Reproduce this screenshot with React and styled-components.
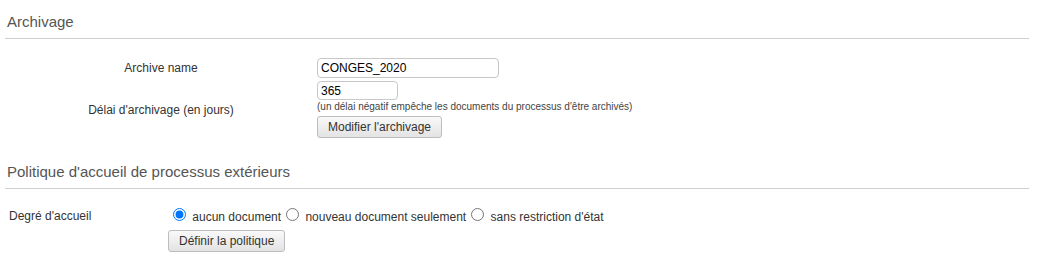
import React from 'react';
import styled, { createGlobalStyle } from 'styled-components';

const GlobalStyle = createGlobalStyle`
  body {
    margin: 0;
    background: #fff;
    font-family: "Liberation Sans", Arial, sans-serif;
    font-size: 12px;
    color: #333;
  }
`;

const Page = styled.div`
  width: 1024px;
  margin-left: 5px;
`;

const SectionTitle = styled.h2`
  margin: ${(p) => (p.$first ? '0' : '12px')} 0 0;
  padding: 13px 2px 7px;
  font-size: 15px;
  line-height: 18px;
  font-weight: normal;
  color: #555;
  border-bottom: 1px solid #cfcfcf;
`;

const FormGrid = styled.div`
  display: grid;
  grid-template-columns: ${(p) => p.$labelWidth}px 1fr;
  row-gap: 3px;
  align-items: center;
  margin-top: ${(p) => p.$top}px;
`;

const Label = styled.div`
  text-align: ${(p) => (p.$left ? 'left' : 'center')};
  padding-left: ${(p) => (p.$left ? '4px' : '0')};
  padding-top: ${(p) => (p.$left ? '4px' : '0')};
  align-self: ${(p) => (p.$left ? 'start' : 'center')};
  line-height: 14px;
  color: #333;
`;

const Field = styled.div`
  display: flex;
  flex-direction: column;
  align-items: flex-start;
`;

const TextInput = styled.input`
  box-sizing: border-box;
  width: ${(p) => p.$width}px;
  height: ${(p) => p.$height}px;
  margin: 0;
  padding: 0 3px;
  border: 1px solid #c8c8c8;
  border-radius: 4px;
  font-family: "Liberation Sans", Arial, sans-serif;
  font-size: 12px;
  color: #000;
  background: #fff;
  outline: none;
`;

const Hint = styled.div`
  font-size: 10px;
  line-height: 13px;
  color: #444;
  margin-bottom: 3px;
`;

const Button = styled.button`
  box-sizing: border-box;
  height: 22px;
  margin: ${(p) => p.$top || 0}px 0 0;
  padding: 0 10px;
  border: 1px solid #bdbdbd;
  border-radius: 3px;
  background: linear-gradient(to bottom, #f9f9f9, #e3e3e3);
  font-family: "Liberation Sans", Arial, sans-serif;
  font-size: 12px;
  color: #333;
  cursor: pointer;
`;

const RadioLine = styled.div`
  line-height: normal;
  white-space: nowrap;
  color: #333;
`;

const Radio = styled.input.attrs({ type: 'radio' })`
  width: 13px;
  height: 13px;
  margin: 3px 3px 0 5px;
  vertical-align: baseline;
`;

const options = [
  { value: 'none', label: 'aucun document' },
  { value: 'new', label: 'nouveau document seulement' },
  { value: 'any', label: "sans restriction d'état" },
];

export default function App() {
  return (
    <>
      <GlobalStyle />
      <Page>
        <SectionTitle $first>Archivage</SectionTitle>
        <FormGrid $labelWidth={312} $top={19}>
          <Label>Archive name</Label>
          <Field>
            <TextInput $width={182} $height={20} defaultValue="CONGES_2020" />
          </Field>
          <Label>Délai d'archivage (en jours)</Label>
          <Field>
            <TextInput $width={81} $height={19} defaultValue="365" />
            <Hint>(un délai négatif empêche les documents du processus d'être archivés)</Hint>
            <Button>Modifier l'archivage</Button>
          </Field>
        </FormGrid>

        <SectionTitle>Politique d'accueil de processus extérieurs</SectionTitle>
        <FormGrid $labelWidth={163} $top={16}>
          <Label $left>Degré d'accueil</Label>
          <Field>
            <RadioLine>
              {options.map((o) => (
                <label key={o.value}>
                  <Radio name="accueil" value={o.value} defaultChecked={o.value === 'none'} />
                  {' '}{o.label}
                </label>
              ))}
            </RadioLine>
            <Button $top={6}>Définir la politique</Button>
          </Field>
        </FormGrid>
      </Page>
    </>
  );
}
